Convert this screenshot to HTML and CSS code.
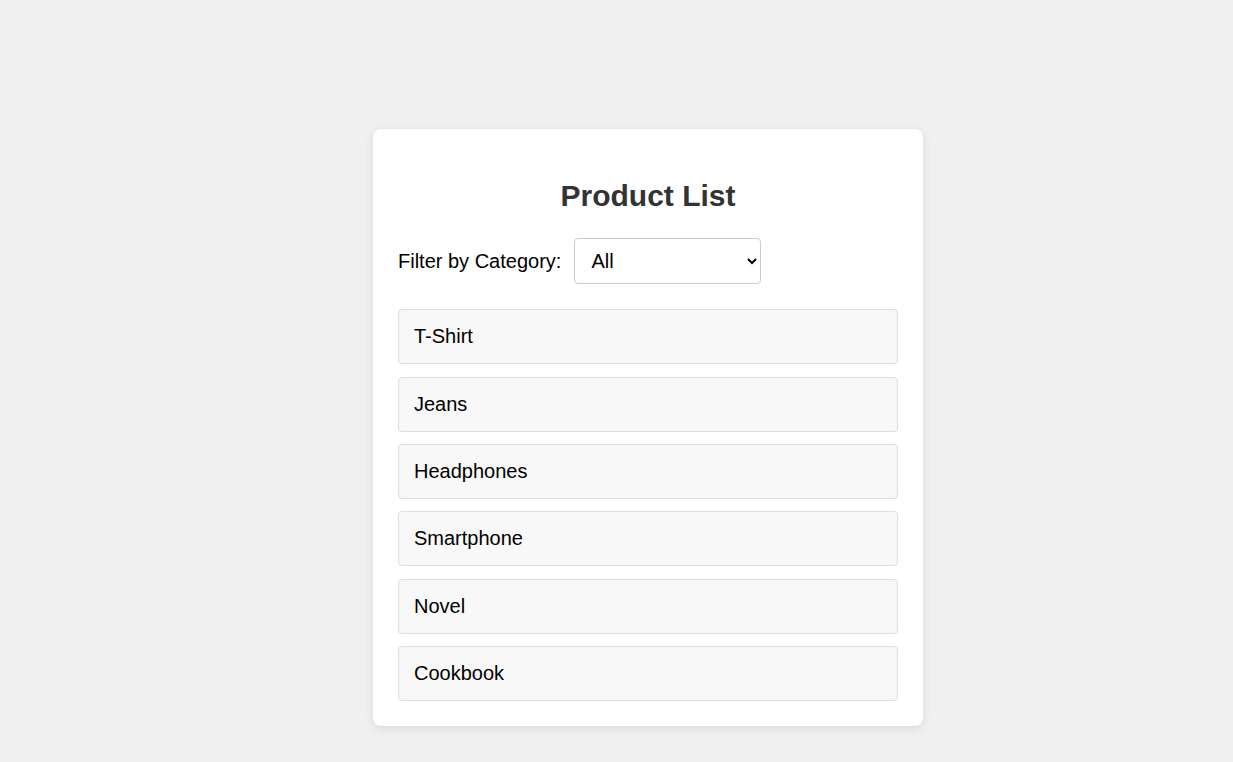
FILE: index.html
```html
<!DOCTYPE html>
<html lang="en">
<head>
<meta charset="UTF-8">
<title>Product List</title>
<link rel="stylesheet" href="styles.css">
</head>
<body>
<div class="page">
  <div class="card">
    <h2 class="title">Product List</h2>
    <div class="filter">
      <label class="filter-label" for="cat">Filter by Category:</label>
      <select id="cat" class="filter-select">
        <option>All</option>
        <option>Clothing</option>
        <option>Electronics</option>
        <option>Books</option>
      </select>
    </div>
    <ul class="list">
      <li class="item">T-Shirt</li>
      <li class="item">Jeans</li>
      <li class="item">Headphones</li>
      <li class="item">Smartphone</li>
      <li class="item">Novel</li>
      <li class="item">Cookbook</li>
    </ul>
  </div>
</div>
</body>
</html>
```

FILE: styles.css
```css
html, body {
  margin: 0;
  padding: 0;
  background: #f0f0f0;
  font-family: "Liberation Sans", Arial, sans-serif;
  font-size: 20px;
}
.page {
  padding: 129px 0 0 373px;
  min-height: 762px;
  box-sizing: border-box;
}
.card {
  width: 500px;
  padding: 25px;
  background: #fff;
  border-radius: 8px;
  box-shadow: 0 2px 10px rgba(0, 0, 0, 0.1);
}
.title {
  margin: 24.9px 0;
  font-size: 30px;
  font-weight: bold;
  color: #333;
  text-align: center;
  line-height: 34.5px;
}
.filter {
  display: flex;
  align-items: center;
  gap: 13px;
  margin-bottom: 25px;
}
.filter-label {
  font-size: 20px;
  color: #000;
}
.filter-select {
  width: 187px;
  height: 46px;
  box-sizing: border-box;
  padding: 0 10px 0 12px;
  font-family: "Liberation Sans", Arial, sans-serif;
  font-size: 20px;
  color: #000;
  background: #fff;
  border: 1px solid #ccc;
  border-radius: 4px;
}
.list {
  list-style: none;
  margin: 0;
  padding: 0;
  display: flex;
  flex-direction: column;
  gap: 12.4px;
}
.item {
  padding: 15px;
  font-size: 20px;
  line-height: 23px;
  color: #000;
  background: #f8f8f8;
  border: 1px solid #ddd;
  border-radius: 4px;
}
```
